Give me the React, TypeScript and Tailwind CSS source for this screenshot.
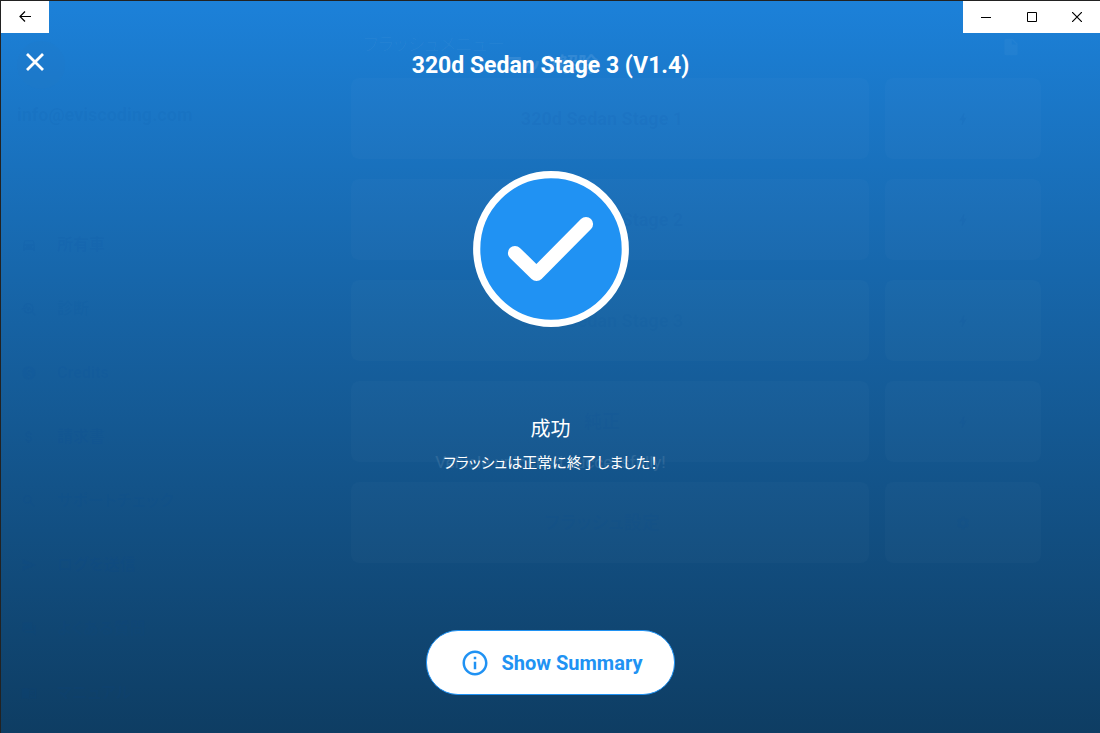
// Full-window result screen shown when flashing has finished.
// The flash menu stays mounted underneath and shines through faintly.

import type { ReactNode } from "react";
import {
  MdAttachMoney,
  MdBolt,
  MdDirectionsCar,
  MdInfoOutline,
  MdInsertDriveFile,
  MdMenuBook,
  MdMonetizationOn,
  MdQuestionAnswer,
  MdSearch,
  MdSend,
  MdSettings,
  MdTroubleshoot,
} from "react-icons/md";

const sidebarItems: { label: string; icon: ReactNode }[] = [
  { label: "所有車", icon: <MdDirectionsCar /> },
  { label: "診断", icon: <MdTroubleshoot /> },
  { label: "Credits", icon: <MdMonetizationOn /> },
  { label: "請求書", icon: <MdAttachMoney /> },
  { label: "サポートチェック", icon: <MdSearch /> },
  { label: "ログを送信", icon: <MdSend /> },
  { label: "よくある質問", icon: <MdQuestionAnswer /> },
  { label: "マニュアル", icon: <MdMenuBook /> },
];

const flashOptions: { label: string; icon: ReactNode }[] = [
  { label: "320d Sedan Stage 1", icon: <MdBolt /> },
  { label: "320d Sedan Stage 2", icon: <MdBolt /> },
  { label: "320d Sedan Stage 3", icon: <MdBolt /> },
  { label: "純正", icon: <MdBolt /> },
  { label: "フラッシュ設定", icon: <MdSettings /> },
];

function FlashMenu() {
  return (
    <div aria-hidden="true" className="col-start-1 row-start-1 flex pt-8 text-[#0046a0]/7">
      <aside className="w-80 shrink-0 pl-4">
        <div className="mt-2 size-12 rounded-full bg-[#2a7cc4]/15" />
        <div className="mt-3 text-lg font-bold leading-7">info@eviscoding.com</div>
        <ul className="mt-[84px]">
          {sidebarItems.map((item) => (
            <li key={item.label} className="flex h-16 items-center gap-5 pl-1 text-base font-bold">
              <span>{item.icon}</span>
              <span>{item.label}</span>
            </li>
          ))}
        </ul>
      </aside>

      <div className="min-w-0 flex-1 pl-[30px] pr-[59px]">
        <div className="flex h-[45px] items-start justify-between pl-3 pr-5 text-white/3">
          <span className="text-lg leading-6">フラッシュメニュー</span>
          <MdInsertDriveFile className="mt-1 size-5" />
        </div>
        <div className="space-y-5">
          {flashOptions.map((option) => (
            <div key={option.label} className="flex h-[81px] gap-4">
              <div className="flex flex-1 items-center justify-center rounded-lg bg-white/2 pr-4 text-lg font-bold">
                {option.label}
              </div>
              <div className="flex w-[156px] items-center justify-center rounded-lg bg-white/2 text-base">
                {option.icon}
              </div>
            </div>
          ))}
        </div>
      </div>
    </div>
  );
}

// The unlock step's message, almost faded out
function UnlockMessage() {
  return (
    <div
      aria-hidden="true"
      className="col-start-1 row-start-1 flex flex-col items-center pt-12 text-white/10"
    >
      <div className="text-xl font-bold leading-8">ロック解除</div>
      <div className="mt-[369px] text-[17px] leading-6">Vehicle unlocked successfully!</div>
    </div>
  );
}

function TitleBar() {
  return (
    <div className="flex h-8 justify-between text-black">
      <button type="button" aria-label="Back" className="flex w-12 items-center justify-center bg-white">
        <svg width="12" height="12" viewBox="0 0 12 12" fill="none" stroke="currentColor" strokeWidth="1.2">
          <path d="M12 5.5H1M6 .5l-5 5 5 5" />
        </svg>
      </button>
      <div className="flex w-[137px] bg-white">
        <button type="button" aria-label="Minimize" className="flex flex-1 items-center justify-center">
          <svg width="10" height="10" viewBox="0 0 10 10" fill="none" stroke="currentColor">
            <path d="M0 5.5h10" />
          </svg>
        </button>
        <button type="button" aria-label="Maximize" className="flex flex-1 items-center justify-center">
          <svg width="10" height="10" viewBox="0 0 10 10" fill="none" stroke="currentColor">
            <path d="M.5.5h9v9h-9z" />
          </svg>
        </button>
        <button type="button" aria-label="Close window" className="flex flex-1 items-center justify-center">
          <svg width="10" height="10" viewBox="0 0 10 10" fill="none" stroke="currentColor" strokeWidth="1.2">
            <path d="M0 0l10 10M10 0L0 10" />
          </svg>
        </button>
      </div>
    </div>
  );
}

function SuccessBadge() {
  return (
    <svg width="156" height="156" viewBox="0 0 156 156" fill="none" stroke="#fff">
      <circle cx="78" cy="78" r="74.3" fill="#2092f3" strokeWidth="7.2" />
      <path
        d="M42 82l21.5 21L113 53"
        strokeWidth="14.2"
        strokeLinecap="round"
        strokeLinejoin="round"
      />
    </svg>
  );
}

export default function App() {
  return (
    <div className="grid min-h-screen overflow-hidden border-l border-t border-[#222] bg-linear-to-b from-[#1c81d9] to-[#0e3d63] font-[Roboto,'Noto_Sans_CJK_JP',sans-serif] [font-feature-settings:'palt']">
      <FlashMenu />
      <UnlockMessage />

      <div className="z-10 col-start-1 row-start-1 flex flex-col text-white">
        <TitleBar />

        <header className="grid h-[66px] grid-cols-[1fr_auto_1fr] items-center">
          <button type="button" aria-label="Close" className="ml-[19px] mt-3.5 self-start justify-self-start">
            <svg width="30" height="30" viewBox="0 0 30 30" fill="none" stroke="currentColor" strokeWidth="2.8">
              <path d="M7 7l16 16M23 7L7 23" />
            </svg>
          </button>
          <h1 className="text-[23px] font-bold leading-9">320d Sedan Stage 3 (V1.4)</h1>
        </header>

        <main className="flex flex-1 flex-col items-center pt-[72px]">
          <SuccessBadge />
          <h2 className="mt-[88px] text-xl leading-7">成功</h2>
          <p className="mt-2 text-[15px] leading-6">フラッシュは正常に終了しました！</p>
        </main>

        <footer className="flex justify-center pb-[38px]">
          <button
            type="button"
            className="flex h-[65px] items-center gap-3 rounded-[32px] border border-[#2092f3] bg-white pl-[33px] pr-8 text-xl font-bold text-[#2092f3]"
          >
            <MdInfoOutline className="size-[30px]" />
            Show Summary
          </button>
        </footer>
      </div>
    </div>
  );
}
